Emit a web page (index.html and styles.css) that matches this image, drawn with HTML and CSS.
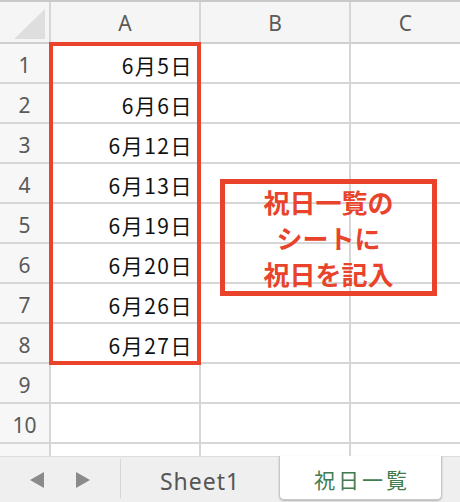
FILE: index.html
```html
<!DOCTYPE html>
<html lang="ja">
<head>
    <meta charset="UTF-8">
    <title>祝日一覧</title>
    <link rel="stylesheet" href="styles.css">
</head>
<body>
    <div class="book">
        <div class="sheet">
            <div class="grid">
                <div class="corner"><span class="corner-mark"></span></div>
                <div class="col-head">A</div>
                <div class="col-head">B</div>
                <div class="col-head last">C</div>

                <div class="row-head">1</div><div class="cell num">6月5日</div><div class="cell"></div><div class="cell last"></div>
                <div class="row-head">2</div><div class="cell num">6月6日</div><div class="cell"></div><div class="cell last"></div>
                <div class="row-head">3</div><div class="cell num">6月12日</div><div class="cell"></div><div class="cell last"></div>
                <div class="row-head">4</div><div class="cell num">6月13日</div><div class="cell"></div><div class="cell last"></div>
                <div class="row-head">5</div><div class="cell num">6月19日</div><div class="cell"></div><div class="cell last"></div>
                <div class="row-head">6</div><div class="cell num">6月20日</div><div class="cell"></div><div class="cell last"></div>
                <div class="row-head">7</div><div class="cell num">6月26日</div><div class="cell"></div><div class="cell last"></div>
                <div class="row-head">8</div><div class="cell num">6月27日</div><div class="cell"></div><div class="cell last"></div>
                <div class="row-head">9</div><div class="cell"></div><div class="cell"></div><div class="cell last"></div>
                <div class="row-head">10</div><div class="cell"></div><div class="cell"></div><div class="cell last"></div>
                <div class="row-head">11</div><div class="cell"></div><div class="cell"></div><div class="cell last"></div>
            </div>

            <!-- callouts drawn over the grid -->
            <div class="mark-range"></div>
            <div class="note">祝日一覧の<br>シートに<br>祝日を記入</div>
        </div>

        <div class="tabbar">
            <div class="tab-nav">
                <span class="arrow arrow-left"></span>
                <span class="arrow arrow-right"></span>
            </div>
            <div class="tab">Sheet1</div>
            <div class="tab active">祝日一覧</div>
        </div>
    </div>
</body>
</html>
```

FILE: styles.css
```css
:root {
    --grid-line: #d6d6d6;
    --head-bg: #f5f5f5;
    --head-text: #5a5a5a;
    --accent-red: #e9442b;
    --tab-green: #3f7d4f;
}

* {
    margin: 0;
    padding: 0;
    box-sizing: border-box;
}

body {
    width: 460px;
    height: 502px;
    overflow: hidden;
    background: #ffffff;
    font-family: "Liberation Sans", "Noto Sans CJK JP", sans-serif;
}

.book {
    display: flex;
    flex-direction: column;
    height: 502px;
}

.sheet {
    position: relative;
    height: 456px;
    overflow: hidden;
    border-top: 2px solid #c9c9c9;
}

.grid {
    display: grid;
    grid-template-columns: 51px 150px 150px 109px;
    grid-template-rows: 42px repeat(11, 40px);
}

.corner,
.col-head,
.row-head {
    background: var(--head-bg);
    color: var(--head-text);
    font-family: "Noto Sans", "Noto Sans CJK JP", sans-serif;
    font-size: 21px;
    display: flex;
    align-items: center;
    justify-content: center;
}

.corner {
    position: relative;
    border-right: 2px solid var(--grid-line);
    border-bottom: 2px solid #cfcfcf;
}

.corner-mark {
    position: absolute;
    right: 4px;
    bottom: 3px;
    width: 31px;
    height: 30px;
    background: #dedede;
    clip-path: polygon(100% 0, 100% 100%, 0 100%);
}

.col-head {
    border-right: 2px solid var(--grid-line);
    border-bottom: 2px solid #cfcfcf;
    padding-top: 2px;
}

.row-head {
    border-right: 2px solid var(--grid-line);
    border-bottom: 2px solid var(--grid-line);
    background: #f7f7f7;
    padding-top: 3px;
}

.cell {
    border-right: 2px solid var(--grid-line);
    border-bottom: 2px solid var(--grid-line);
}

.last {
    border-right: none;
}

.num {
    display: flex;
    align-items: center;
    justify-content: flex-end;
    padding-right: 6px;
    padding-top: 3px;
    font-family: "Noto Sans CJK JP", sans-serif;
    font-size: 21px;
    letter-spacing: 1.5px;
    color: #111111;
}

.mark-range {
    position: absolute;
    left: 49px;
    top: 40px;
    width: 152px;
    height: 323px;
    border: 4px solid var(--accent-red);
}

.note {
    position: absolute;
    left: 220px;
    top: 177px;
    width: 217px;
    height: 117px;
    border: 5px solid var(--accent-red);
    color: var(--accent-red);
    font-family: "Noto Sans CJK JP", sans-serif;
    font-weight: 700;
    font-size: 26px;
    line-height: 36px;
    text-align: center;
    padding-top: 0;
}

/* sheet tabs along the bottom */
.tabbar {
    flex: 1;
    display: flex;
    background: #efefef;
    border-top: 1px solid #dcdcdc;
}

.tab-nav {
    width: 121px;
    display: flex;
    align-items: center;
    gap: 32px;
    padding-left: 30px;
    padding-top: 2px;
    margin: 2px 0 4px;
    border-right: 1px solid #d6d6d6;
}

.arrow {
    width: 0;
    height: 0;
    border-top: 8px solid transparent;
    border-bottom: 8px solid transparent;
}

.arrow-left {
    border-right: 14px solid #8a8a8a;
}

.arrow-right {
    border-left: 14px solid #8a8a8a;
}

.tab {
    width: 158px;
    display: flex;
    align-items: center;
    justify-content: center;
    font-family: "Noto Sans", "Noto Sans CJK JP", sans-serif;
    font-size: 23px;
    letter-spacing: 1px;
    color: #555555;
    padding-top: 2px;
}

.tab.active {
    width: 163px;
    height: 44px;
    margin-top: -1px;
    background: #ffffff;
    border: 1px solid #c8c8c8;
    border-top: none;
    border-radius: 0 0 5px 5px;
    box-shadow: 0 1px 2px rgba(0, 0, 0, 0.25);
    color: var(--tab-green);
    font-family: "Noto Sans CJK JP", sans-serif;
    font-size: 21px;
    letter-spacing: 3px;
    padding-left: 3px;
}
```
